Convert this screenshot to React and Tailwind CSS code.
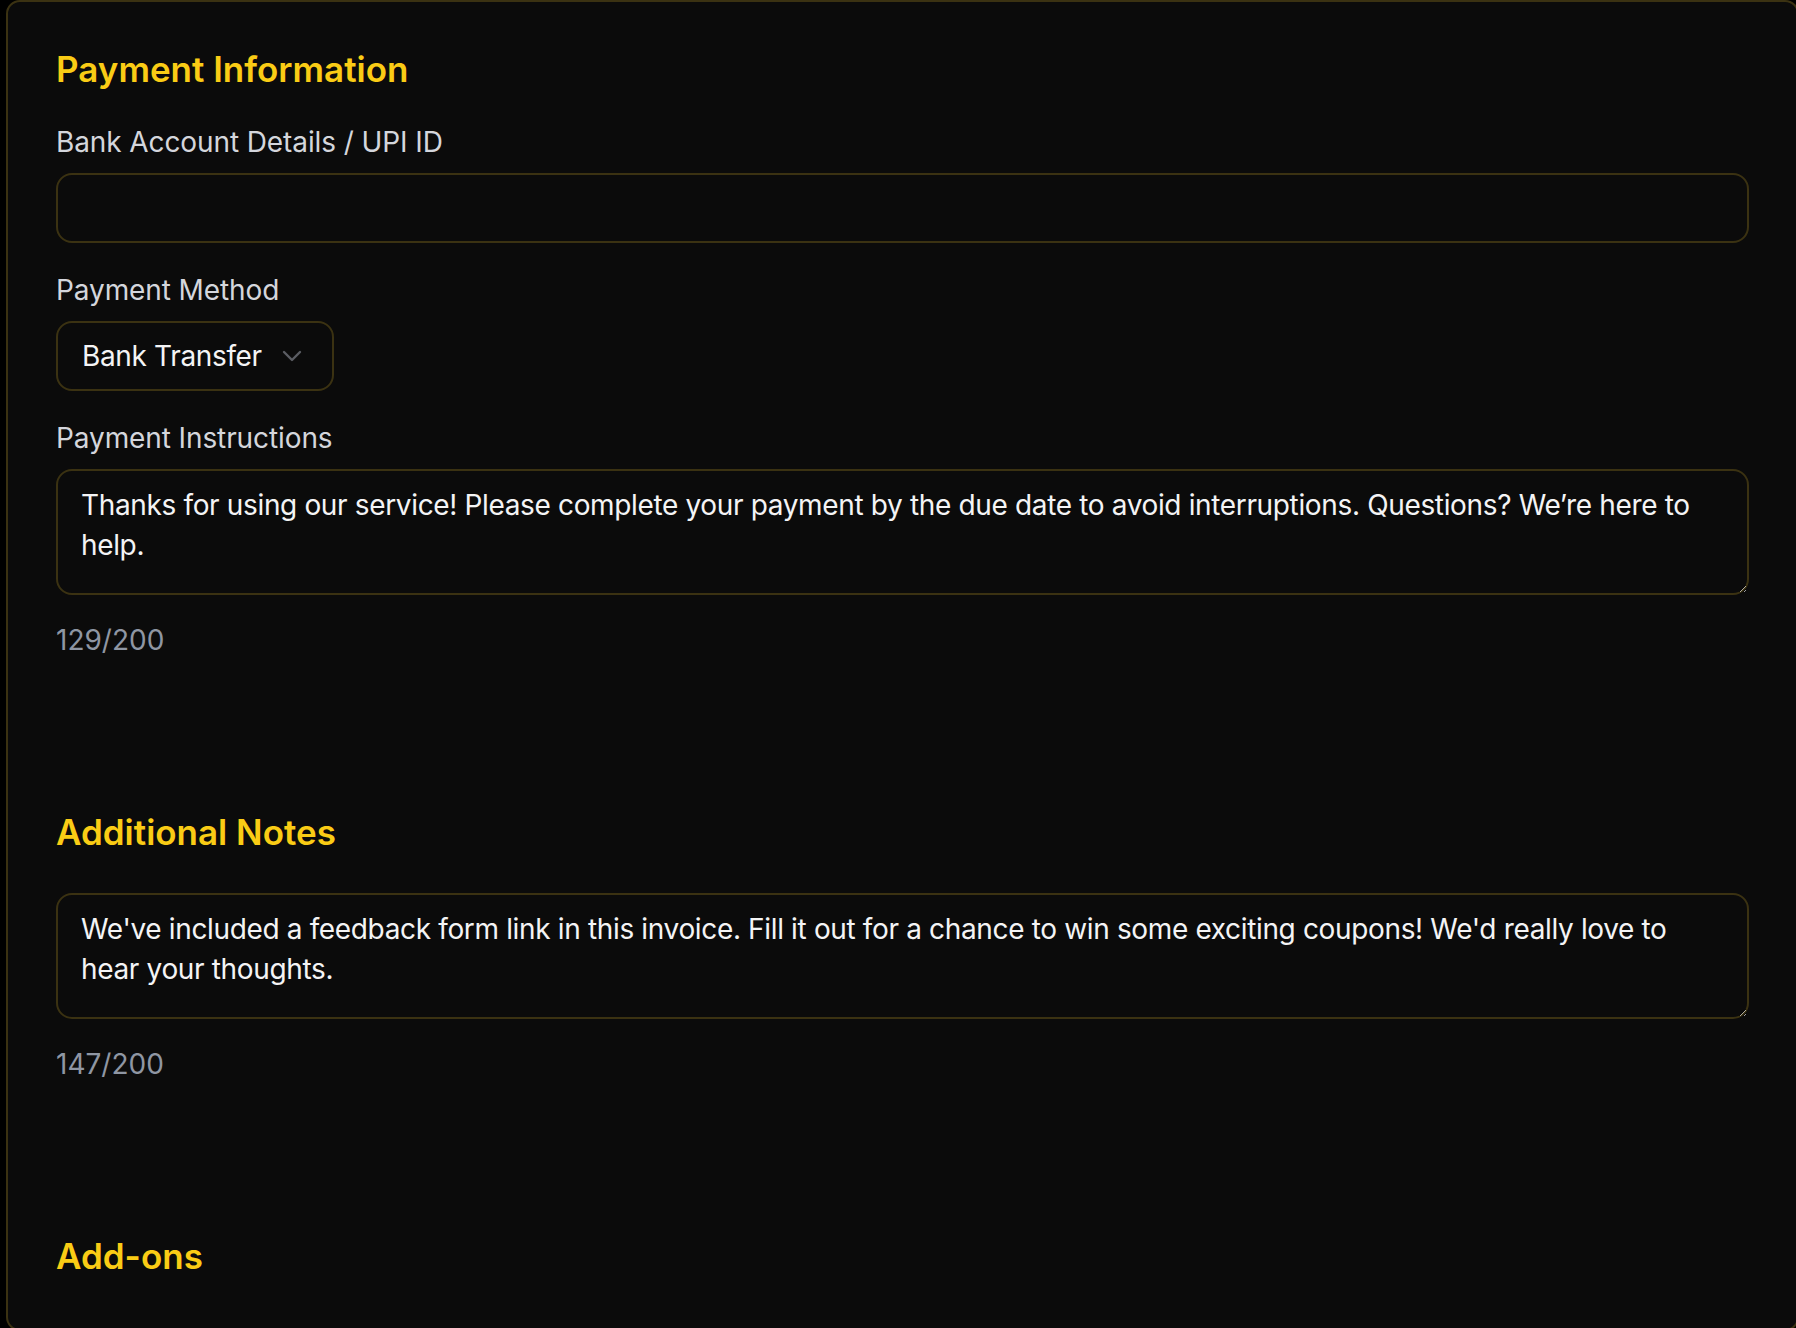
import React from "react";

function Label({ children, className = "" }) {
  return (
    <div className={"text-[28px] leading-[40px] tracking-[-0.1px] text-[#d4d6dc] " + className}>{children}</div>
  );
}

function Heading({ children, className = "" }) {
  return (
    <h2 className={"text-[35px] leading-[38px] font-semibold text-[#facc15] " + className}>{children}</h2>
  );
}

function Counter({ children }) {
  return <div className="mt-[25px] text-[28px] leading-[40px] text-[#8f96a3]">{children}</div>;
}

function Area({ value }) {
  return (
    <textarea
      readOnly
      value={value}
      className="block w-full h-[126px] rounded-[16px] border-2 border-[#3b3212] bg-transparent px-[23px] pt-[14px] pb-[10px] text-[28px] leading-[40px] tracking-[-0.35px] text-[#f4f4f5] outline-none [color-scheme:dark] resize-y"
    />
  );
}

export default function App() {
  return (
    <div className="h-[1328px] w-full overflow-hidden bg-black font-['Inter','Noto_Sans',sans-serif]">
      <div className="ml-[6px] w-[1793px] rounded-[14px] border-2 border-[#3b3212] bg-[#0b0b0b] px-[48px] pt-[48px] pb-[54px]">
        <section>
          <Heading>Payment Information</Heading>
          <Label className="mt-[34px]">Bank Account Details / UPI ID</Label>
          <input
            readOnly
            className="mt-[11px] block h-[70px] w-full rounded-[16px] border-2 border-[#3b3212] bg-transparent px-[23px] text-[28px] text-[#f4f4f5] outline-none"
          />
          <Label className="mt-[27px]">Payment Method</Label>
          <div className="mt-[11px] flex h-[70px] w-[278px] items-center rounded-[16px] border-2 border-[#3b3212] pl-[24px] pr-[30px]">
            <span className="text-[28px] leading-[40px] tracking-[-0.35px] text-[#f4f4f5]">Bank Transfer</span>
            <svg className="ml-auto" width="20" height="12" viewBox="0 0 20 12" fill="none">
              <path d="M2 2l8 8 8-8" stroke="#5b5d63" strokeWidth="2.4" strokeLinecap="round" strokeLinejoin="round" />
            </svg>
          </div>
          <Label className="mt-[27px]">Payment Instructions</Label>
          <div className="mt-[11px]">
            <Area value={"Thanks for using our service! Please complete your payment by the due date to avoid interruptions. Questions? We\u2019re here to help."} />
          </div>
          <Counter>129/200</Counter>
        </section>

        <section className="mt-[153px]">
          <Heading>Additional Notes</Heading>
          <div className="mt-[42px]">
            <Area value={"We've included a feedback form link in this invoice. Fill it out for a chance to win some exciting coupons! We'd really love to hear your thoughts."} />
          </div>
          <Counter>147/200</Counter>
        </section>

        <section className="mt-[153px]">
          <Heading>Add-ons</Heading>
        </section>
      </div>
    </div>
  );
}
